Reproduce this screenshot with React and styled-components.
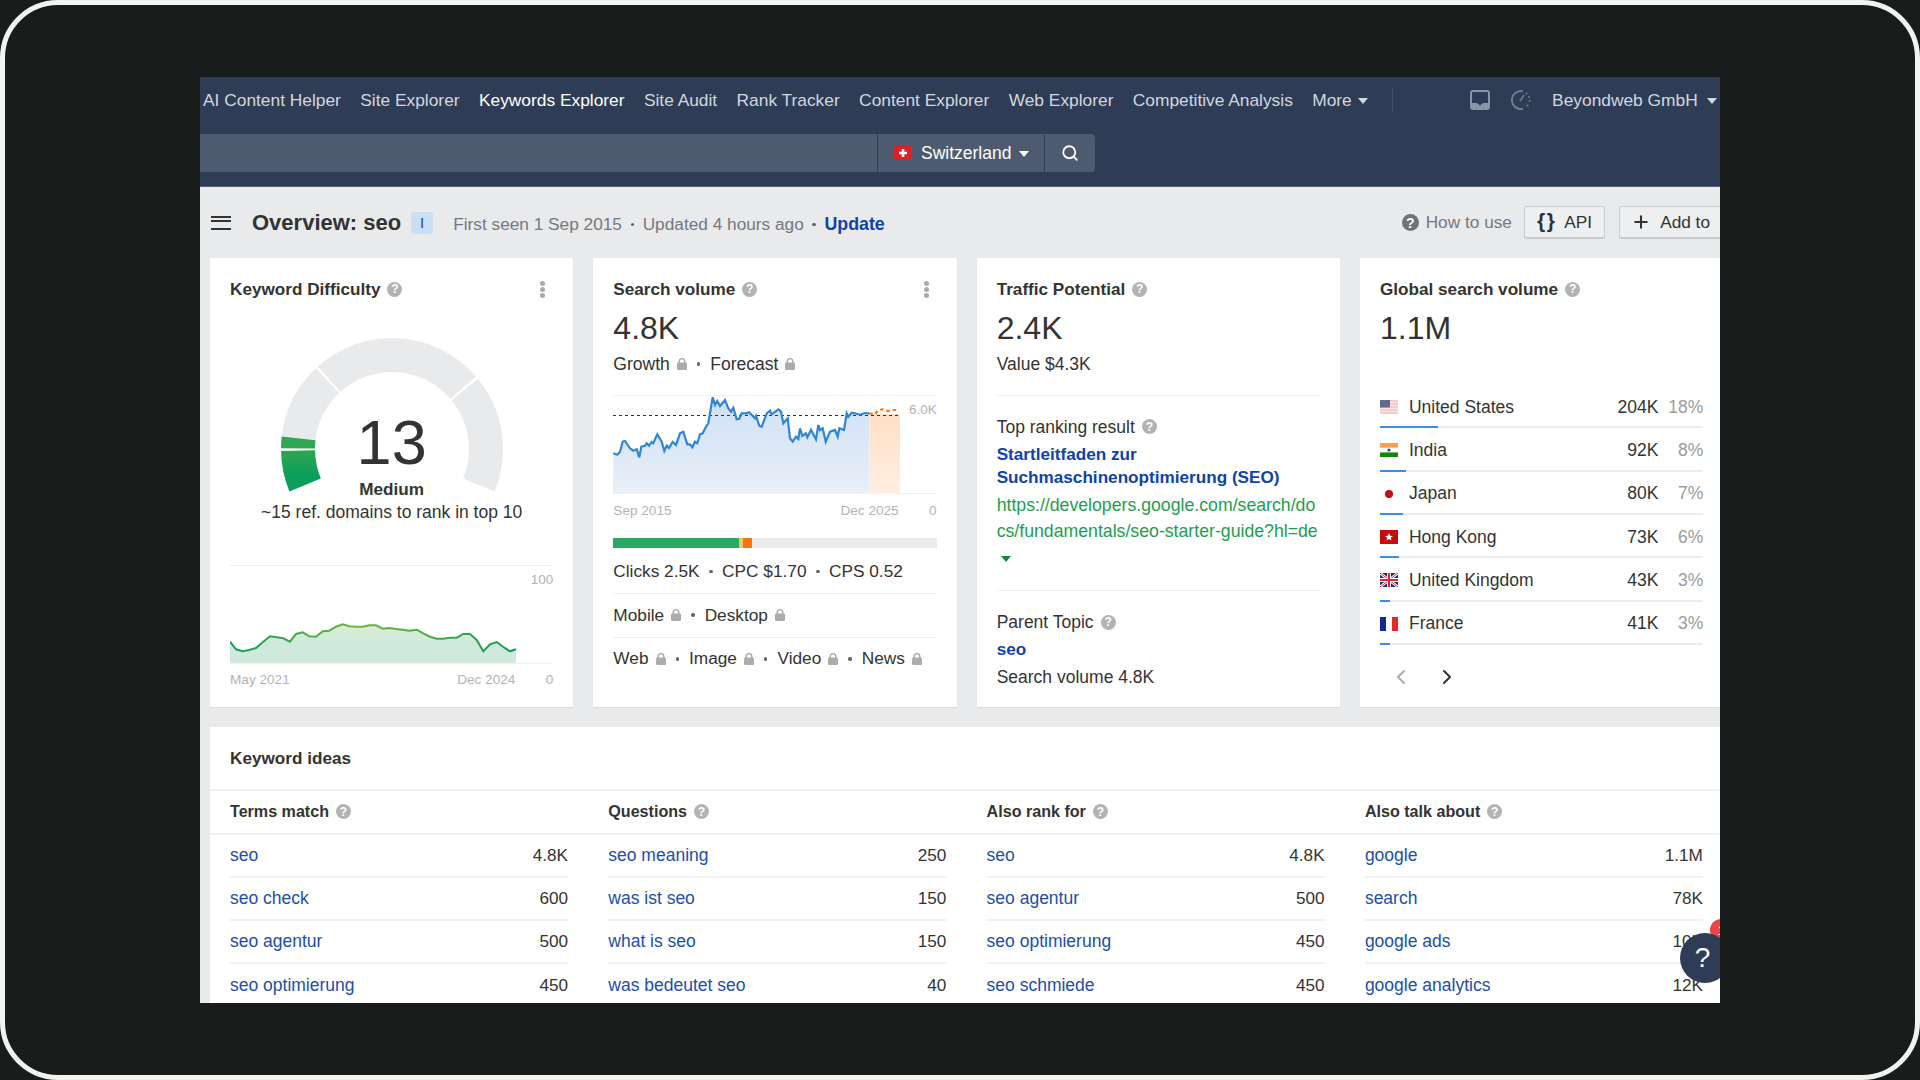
import React from 'react'
import styled, { createGlobalStyle } from 'styled-components'
import { Search, ChevronLeft, ChevronRight, Plus } from 'lucide-react'

const NAV_ITEMS = ['AI Content Helper', 'Site Explorer', 'Keywords Explorer', 'Site Audit', 'Rank Tracker', 'Content Explorer', 'Web Explorer', 'Competitive Analysis']

const COUNTRIES = [
  { name: 'United States', flag: 'us', value: '204K', share: '18%', bar: 58 },
  { name: 'India', flag: 'in', value: '92K', share: '8%', bar: 26 },
  { name: 'Japan', flag: 'jp', value: '80K', share: '7%', bar: 23 },
  { name: 'Hong Kong', flag: 'hk', value: '73K', share: '6%', bar: 19 },
  { name: 'United Kingdom', flag: 'gb', value: '43K', share: '3%', bar: 10 },
  { name: 'France', flag: 'fr', value: '41K', share: '3%', bar: 10 },
]

const IDEAS = [
  { title: 'Terms match', rows: [['seo', '4.8K'], ['seo check', '600'], ['seo agentur', '500'], ['seo optimierung', '450']] },
  { title: 'Questions', rows: [['seo meaning', '250'], ['was ist seo', '150'], ['what is seo', '150'], ['was bedeutet seo', '40']] },
  { title: 'Also rank for', rows: [['seo', '4.8K'], ['seo agentur', '500'], ['seo optimierung', '450'], ['seo schmiede', '450']] },
  { title: 'Also talk about', rows: [['google', '1.1M'], ['search', '78K'], ['google ads', '10K'], ['google analytics', '12K']] },
]

// traced from the reference at 3x, converted to chart coordinates below
const DIFFICULTY_TREND = [[30,155],[48,178],[68,184],[88,180],[108,174],[130,155],[150,139],[170,142],[190,145],[210,155],[228,132],[248,127],[268,139],[288,140],[308,124],[328,122],[348,110],[368,103],[388,109],[408,110],[428,110],[448,106],[468,106],[488,116],[508,114],[528,117],[548,119],[568,122],[590,119],[610,130],[630,140],[650,146],[670,146],[690,143],[710,143],[730,132],[750,132],[770,150],[790,184],[810,163],[830,156],[850,171],[870,184],[888,178]]
const VOLUME_TREND = [[40,220],[52,224],[60,215],[68,185],[75,183],[90,205],[100,212],[110,208],[118,232],[124,200],[135,197],[140,190],[147,197],[155,186],[160,190],[172,163],[185,185],[193,213],[200,197],[207,204],[218,186],[228,195],[240,160],[250,155],[262,193],[270,193],[277,202],[285,185],[292,190],[300,163],[308,160],[318,140],[325,130],[338,52],[345,75],[352,63],[360,78],[375,60],[385,85],[393,95],[400,83],[410,118],[418,116],[425,100],[440,100],[447,97],[465,115],[468,108],[478,137],[485,140],[500,100],[510,92],[515,103],[535,88],[543,95],[550,130],[563,115],[570,175],[578,185],[588,170],[595,177],[600,145],[607,168],[617,160],[622,172],[633,150],[648,178],[655,135],[660,150],[668,145],[677,185],[690,155],[705,150],[713,170],[718,145],[732,150],[740,100],[745,110],[755,98],[765,100],[780,104],[795,99],[808,100]]
const VOLUME_FORECAST = [[808,100],[825,103],[835,90],[848,88],[865,93],[880,90],[898,90]]

const toPoints = (list, ox, oy) => list.map(([x, y]) => `${((x - ox) / 3).toFixed(1)},${((y - oy) / 3).toFixed(1)}`).join(' ')

const polar = (r, deg) => {
  const a = (deg * Math.PI) / 180
  return `${(120 + r * Math.cos(a)).toFixed(2)} ${(119 - r * Math.sin(a)).toFixed(2)}`
}

const sector = (from, to) =>
  `M${polar(111, from)} A111 111 0 0 0 ${polar(111, to)} L${polar(77, to)} A77 77 0 0 1 ${polar(77, from)} Z`

const GlobalStyle = createGlobalStyle`
  html, body {
    margin: 0;
    background: #181c1b;
  }
  * {
    box-sizing: border-box;
  }
`

const Frame = styled.div`
  width: 1920px;
  height: 1080px;
  padding: 72px 0 0 195px;
  background: #181c1b;
  border: 5px solid #f3f4ef;
  border-radius: 58px;
  overflow: hidden;
  font-family: 'Liberation Sans', Arial, sans-serif;
  font-size: 17.5px;
  color: #333;
`

const Screen = styled.div`
  position: relative;
  width: 1520px;
  height: 926px;
  display: flex;
  flex-direction: column;
  overflow: hidden;
  background: #e9eaec;
`

const Header = styled.header`
  flex: none;
  height: 110px;
  background: #2e3c56;
  border-bottom: 1px solid #566579;
`

const NavRow = styled.nav`
  height: 46px;
  margin-bottom: 11px;
  padding-left: 3px;
  display: flex;
  align-items: center;
  font-size: 17.35px;
  white-space: nowrap;
`

const NavLink = styled.a`
  margin-right: 19.4px;
  color: ${(p) => (p.$active ? '#fff' : '#d3d7de')};
`

const Caret = styled.i`
  display: inline-block;
  margin-left: ${(p) => p.$gap || 6}px;
  border-left: 5px solid transparent;
  border-right: 5px solid transparent;
  border-top: 6px solid ${(p) => p.$color || '#d3d7de'};
  vertical-align: 2px;
`

const NavDivider = styled.span`
  width: 1px;
  height: 24px;
  margin: 0 0 0 5px;
  background: #435068;
`

const NavIcon = styled.span`
  display: flex;
  margin-left: ${(p) => p.$left}px;
`

const Account = styled.span`
  margin-left: 21px;
  color: #d3d7de;
`

const SearchRow = styled.div`
  height: 38px;
  display: flex;
`

const SearchInput = styled.div`
  width: 677px;
  background: #4d5a70;
`

const CountrySelect = styled.div`
  width: 166px;
  margin-left: 1px;
  padding-left: 16px;
  display: flex;
  align-items: center;
  background: #4d5a70;
  color: #fff;
`

const SearchButton = styled.div`
  width: 50px;
  margin-left: 1px;
  display: flex;
  align-items: center;
  justify-content: center;
  background: #4d5a70;
  border-radius: 0 4px 4px 0;
  color: #fff;
`

const Toolbar = styled.div`
  flex: none;
  height: 71px;
  margin-right: -3px;
  padding-left: 11px;
  display: flex;
  align-items: center;
  font-size: 17.25px;
`

const Burger = styled.span`
  width: 20px;
  height: 14px;
  border-top: 2.4px solid #333;
  border-bottom: 2.4px solid #333;
  position: relative;
  &::after {
    content: '';
    position: absolute;
    left: 0;
    right: 0;
    top: 2.4px;
    height: 2.4px;
    background: #333;
  }
`

const PageTitle = styled.h1`
  margin: 1px 0 0 21px;
  font-size: 22px;
  font-weight: 700;
  color: #333;
`

const Badge = styled.span`
  width: 22px;
  height: 22px;
  margin-left: 10px;
  display: flex;
  align-items: center;
  justify-content: center;
  background: #c9dff6;
  border-radius: 3px;
  font-size: 15px;
  color: #2b4a7a;
`

const Meta = styled.div`
  margin: 4px 0 0 20px;
  display: flex;
  align-items: center;
  color: #75797f;
`

const MetaLink = styled.a`
  color: #0f43a8;
  font-weight: 700;
  font-size: 17.8px;
`

const Dot = styled.span`
  width: 3.5px;
  height: 3.5px;
  margin: 0 ${(p) => p.$gap || 10}px;
  flex: none;
  border-radius: 50%;
  background: ${(p) => p.$color || '#666'};
`

const ToolbarRight = styled.div`
  margin-left: auto;
  display: flex;
  align-items: center;
`

const HowTo = styled.span`
  display: flex;
  align-items: center;
  gap: 7px;
  margin-right: 12px;
  color: #75797f;
`

const ToolButton = styled.button`
  height: 33px;
  margin-left: ${(p) => p.$left || 0}px;
  padding: 0 12px 0 ${(p) => p.$pad || 12}px;
  display: flex;
  align-items: center;
  gap: ${(p) => p.$gap || 8}px;
  background: #eeeff1;
  border: 1px solid #c9cbcf;
  border-bottom-width: 2px;
  border-radius: 3px;
  font: inherit;
  color: #333;
`

const Braces = styled.span`
  font-weight: 700;
  font-size: 21px;
  letter-spacing: 1.5px;
  line-height: 1;
  margin-top: -3px;
`

const Cards = styled.div`
  flex: none;
  padding-left: 10px;
  display: grid;
  grid-template-columns: repeat(4, 363.33px);
  gap: 20px;
`

const Card = styled.section`
  height: 449px;
  padding: 20px 20px 0;
  background: #fff;
  box-shadow: 0 1px 1px rgba(0, 0, 0, 0.06);
`

const CardHead = styled.div`
  height: 22px;
  display: flex;
  align-items: center;
`

const CardTitle = styled.span`
  font-size: 17.15px;
  font-weight: 700;
  color: #333;
`

const Help = styled.span`
  width: ${(p) => p.$size || 15}px;
  height: ${(p) => p.$size || 15}px;
  margin-left: ${(p) => p.$left ?? 7}px;
  flex: none;
  display: inline-flex;
  align-items: center;
  justify-content: center;
  border-radius: 50%;
  background: ${(p) => p.$color || '#b1b3b5'};
  color: #fff;
  font-size: ${(p) => (p.$size || 15) - 3}px;
  font-weight: 700;
  line-height: 1;
`

const Kebab = styled.span`
  margin-left: auto;
  margin-right: 8px;
  width: 5px;
  height: 5px;
  border-radius: 50%;
  background: #a9abad;
  box-shadow: 0 -6px 0 #a9abad, 0 6px 0 #a9abad;
`

const BigNumber = styled.div`
  margin-top: 8px;
  font-size: 32px;
  line-height: 40px;
  color: #333;
`

const SubRow = styled.div`
  margin-top: ${(p) => p.$top ?? 5}px;
  line-height: 22px;
  display: flex;
  align-items: center;
  white-space: nowrap;
`

const GaugeBox = styled.div`
  position: relative;
  width: 240px;
  height: 170px;
  margin: 30px auto 0;
`

const GaugeValue = styled.div`
  position: absolute;
  left: 0;
  right: 0;
  top: 77px;
  text-align: center;
  font-size: 63px;
  line-height: 70px;
  color: #333;
`

const GaugeLabel = styled.div`
  position: absolute;
  left: 0;
  right: 0;
  top: 148px;
  text-align: center;
  font-size: 17.15px;
  font-weight: 700;
  line-height: 22px;
`

const GaugeCaption = styled.div`
  margin-top: 1px;
  text-align: center;
  line-height: 22px;
  white-space: nowrap;
`

const Rule = styled.div`
  margin-top: ${(p) => p.$top || 0}px;
  border-top: 1px solid #ececed;
`

const ChartBox = styled.div`
  position: relative;
  margin-top: ${(p) => p.$top || 0}px;
  line-height: 0;
`

const ChartMax = styled.span`
  position: absolute;
  right: 0;
  top: ${(p) => p.$top}px;
  font-size: 13.5px;
  line-height: 18px;
  color: #b2b3b5;
`

const AxisRow = styled.div`
  margin-top: 7px;
  display: flex;
  font-size: 13.6px;
  line-height: 18px;
  color: #b2b3b5;
`

const AxisEnd = styled.span`
  margin-left: auto;
`

const AxisZero = styled.span`
  width: ${(p) => p.$width}px;
  text-align: right;
`

const SerpBar = styled.div`
  height: 10px;
  margin-top: 18px;
  display: flex;
  background: #eaebed;
`

const SerpPart = styled.span`
  width: ${(p) => p.$width}px;
  background: ${(p) => p.$color};
`

const StatRow = styled.div`
  height: 43.8px;
  margin-top: ${(p) => p.$top || 0}px;
  display: flex;
  align-items: center;
  font-size: 17.25px;
  white-space: nowrap;
  border-bottom: 1px solid ${(p) => (p.$last ? 'transparent' : '#ececed')};
`

const LockMark = styled.svg`
  width: 10px;
  height: 12px;
  margin-left: 7px;
  flex: none;
`

const SectionLabel = styled.div`
  padding-top: 20px;
  display: flex;
  align-items: center;
  line-height: 22px;
`

const ResultLink = styled.a`
  display: block;
  margin-top: 5px;
  font-size: 17.15px;
  font-weight: 700;
  line-height: 23px;
  color: #0f43a8;
`

const ResultUrl = styled.a`
  display: block;
  margin-top: 3.5px;
  font-size: 17.7px;
  line-height: 26px;
  color: #1e9d50;
  white-space: nowrap;
`

const UrlLine = styled.span`
  display: block;
`

const UrlToggle = styled.i`
  display: block;
  width: 0;
  margin: 12px 0 0 4px;
  border-left: 5px solid transparent;
  border-right: 5px solid transparent;
  border-top: 6px solid #138a3e;
`

const TopicLink = styled.a`
  display: block;
  margin-top: 5px;
  font-size: 17.15px;
  font-weight: 700;
  line-height: 22px;
  color: #0f43a8;
`

const CountryList = styled.div`
  margin-top: 37px;
`

const CountryRow = styled.div`
  height: 43.33px;
  display: flex;
  flex-direction: column;
`

const CountryLine = styled.div`
  flex: 1;
  padding-top: 3px;
  display: flex;
  align-items: center;
`

const FlagBox = styled.svg`
  width: 18px;
  height: 14px;
  margin-right: ${(p) => p.$gap}px;
  flex: none;
`

const CountryValue = styled.span`
  margin-left: auto;
`

const CountryShare = styled.span`
  width: 45px;
  text-align: right;
  color: #9a9b9d;
`

const ShareTrack = styled.div`
  flex: none;
  height: 2px;
  background: #ececed;
`

const ShareFill = styled.div`
  width: ${(p) => p.$width}px;
  height: 2px;
  background: #3b8ee0;
`

const Pager = styled.div`
  margin-top: 20px;
  padding-left: 9px;
  display: flex;
  gap: 22px;
  color: #333;
`

const IdeasPanel = styled.section`
  flex: 1;
  margin: 20px 0 0 10px;
  background: #fff;
`

const IdeasTitle = styled.div`
  height: 64px;
  padding: 0 20px;
  display: flex;
  align-items: center;
  font-size: 17.15px;
  font-weight: 700;
  border-bottom: 2px solid #f0f1f2;
`

const IdeasHead = styled.div`
  height: 43.5px;
  border-bottom: 2px solid #f0f1f2;
`

const IdeasGrid = styled.div`
  padding: 0 20px;
  display: grid;
  grid-template-columns: repeat(4, 338px);
  column-gap: 40.3px;
`

const IdeasHeadCell = styled.div`
  height: 41px;
  display: flex;
  align-items: center;
  font-size: 16.1px;
  font-weight: 700;
`

const IdeaRow = styled.div`
  height: 43.33px;
  display: flex;
  align-items: center;
  justify-content: space-between;
  border-bottom: 2px solid #f0f1f2;
`

const IdeaLink = styled.a`
  color: #1b4fa8;
`

const IdeaVolume = styled.span`
  font-size: 17.15px;
`

const ChatBadge = styled.span`
  position: absolute;
  left: 1510px;
  top: 842px;
  width: 22px;
  height: 22px;
  display: flex;
  align-items: center;
  justify-content: center;
  border-radius: 50%;
  background: #ef4444;
  color: #fff;
  font-size: 13px;
`

const ChatButton = styled.span`
  position: absolute;
  left: 1480px;
  top: 856px;
  width: 50px;
  height: 50px;
  padding-right: 5px;
  display: flex;
  align-items: center;
  justify-content: center;
  border-radius: 50%;
  background: #2e3c56;
  color: #fff;
  font-size: 28px;
`

const Lock = () => (
  <LockMark viewBox="0 0 10 12">
    <path d="M2.2 5.5V3.4a2.8 2.8 0 0 1 5.6 0v2.1" fill="none" stroke="#aaacae" strokeWidth="1.5" />
    <rect x="0" y="4.6" width="10" height="7.4" rx="1.2" fill="#aaacae" />
  </LockMark>
)

const Flag = ({ code, gap = 11 }) => (
  <FlagBox viewBox="0 0 18 14" $gap={gap}>
    {code === 'us' && (
      <>
        <rect width="18" height="14" fill="#fbe3e3" />
        <path d="M0 1h18M0 4h18M0 7h18M0 10h18M0 13h18" stroke="#f2b3b3" strokeWidth="1.2" />
        <rect width="10" height="7.5" fill="#5d6c8c" />
      </>
    )}
    {code === 'in' && (
      <>
        <rect width="18" height="14" fill="#fff" />
        <rect width="18" height="4.6" fill="#ff9f3f" />
        <rect y="9.4" width="18" height="4.6" fill="#138808" />
        <circle cx="9" cy="7" r="1.6" fill="#2a4a8c" />
      </>
    )}
    {code === 'jp' && <circle cx="9" cy="7" r="4" fill="#c80a0a" />}
    {code === 'hk' && (
      <>
        <rect width="18" height="14" fill="#c80a0a" />
        <path d="M9 3l1.1 2.7 2.9.2-2.2 1.9.7 2.8L9 9.1l-2.5 1.5.7-2.8L5 5.9l2.9-.2z" fill="#fff" />
      </>
    )}
    {code === 'gb' && (
      <>
        <rect width="18" height="14" fill="#1c2d6e" />
        <path d="M0 0l18 14M18 0L0 14" stroke="#fff" strokeWidth="2.6" />
        <path d="M0 0l18 14M18 0L0 14" stroke="#d8283c" strokeWidth="1" />
        <path d="M9 0v14M0 7h18" stroke="#fff" strokeWidth="4" />
        <path d="M9 0v14M0 7h18" stroke="#d8283c" strokeWidth="2.2" />
      </>
    )}
    {code === 'fr' && (
      <>
        <rect width="6" height="14" fill="#10298a" />
        <rect x="12" width="6" height="14" fill="#e12b2b" />
      </>
    )}
    {code === 'ch' && (
      <>
        <rect width="18" height="14" rx="1" fill="#d8232a" />
        <path d="M9 3v8M5 7h8" stroke="#fff" strokeWidth="2.6" />
      </>
    )}
  </FlagBox>
)

const BookIcon = () => (
  <svg width="20" height="20" viewBox="0 0 20 20">
    <rect x="1" y="1" width="18" height="18" rx="2" fill="none" stroke="#8a95a6" strokeWidth="2" />
    <path d="M1 13h6l3 2.5 3-2.5h6v4a2 2 0 0 1-2 2H3a2 2 0 0 1-2-2z" fill="#8a95a6" />
  </svg>
)

const SpeedIcon = () => (
  <svg width="20" height="20" viewBox="0 0 20 20" fill="none" stroke="#6f7c91" strokeWidth="2">
    <path d="M12 1.3A9 9 0 1 0 12 18.8" />
    <path d="M15.5 3.5l.1.1M18 7l.1.1M18.7 11v.1M16.6 15.5l.1.1" strokeLinecap="round" />
    <path d="M9 11l4-6" strokeWidth="1.6" />
  </svg>
)

const KeywordGauge = () => (
  <svg width="240" height="170" viewBox="0 0 240 170">
    <defs>
      <linearGradient id="gaugeGreen" x1="0" y1="0" x2="0" y2="1">
        <stop offset="0" stopColor="#2ea552" />
        <stop offset="0.6" stopColor="#0b9f5d" />
      </linearGradient>
    </defs>
    <path d={sector(-22.5, 39.3)} fill="#e9eaec" />
    <path d={sector(40.7, 132)} fill="#e9eaec" />
    <path d={sector(133.4, 173.5)} fill="#e9eaec" />
    <path d={sector(173.5, 179.6)} fill="#2fa651" />
    <path d={sector(181, 202.5)} fill="url(#gaugeGreen)" />
  </svg>
)

const DifficultyChart = () => {
  const line = toPoints(DIFFICULTY_TREND, 30, 0)
  return (
    <svg width="323" height="74" viewBox="0 0 323 74">
      <defs>
        <linearGradient id="kdLine" x1="0" y1="0" x2="1" y2="0">
          <stop offset="0" stopColor="#0f9d58" />
          <stop offset="0.2" stopColor="#3aa84a" />
          <stop offset="0.45" stopColor="#6db640" />
          <stop offset="0.7" stopColor="#45ab48" />
          <stop offset="1" stopColor="#0f9d58" />
        </linearGradient>
        <linearGradient id="kdFill" x1="0" y1="0" x2="0" y2="1">
          <stop offset="0" stopColor="#dcedd3" />
          <stop offset="0.5" stopColor="#cfe9dc" />
        </linearGradient>
      </defs>
      <path d="M0 73.2H323" stroke="#ececed" />
      <polygon points={`0,73 ${line} 286,73`} fill="url(#kdFill)" />
      <polyline points={line} fill="none" stroke="url(#kdLine)" strokeWidth="2" />
    </svg>
  )
}

const VolumeChart = () => {
  const line = toPoints(VOLUME_TREND, 39, 45)
  const forecast = toPoints(VOLUME_FORECAST, 39, 45)
  return (
    <svg width="324" height="100" viewBox="0 0 324 100">
      <defs>
        <linearGradient id="volFill" x1="0" y1="0" x2="0" y2="1">
          <stop offset="0" stopColor="#cfe0f5" />
          <stop offset="1" stopColor="#e9f0f9" />
        </linearGradient>
        <linearGradient id="foreFill" x1="0" y1="0" x2="0" y2="1">
          <stop offset="0" stopColor="#fedfc6" />
          <stop offset="1" stopColor="#ffefe2" />
        </linearGradient>
      </defs>
      <path d="M0 0.5H324M0 98.5H324" stroke="#efeff0" />
      <polygon points={`0,99 ${line} 256.5,99`} fill="url(#volFill)" />
      <rect x="256.5" y="19" width="30.5" height="80" fill="url(#foreFill)" />
      <path d="M0 20.5H287" stroke="#333" strokeDasharray="3 3" />
      <polyline points={line} fill="none" stroke="#2f86d8" strokeWidth="2.2" />
      <polyline points={forecast} fill="none" stroke="#f57a14" strokeWidth="2.2" strokeDasharray="3.5 3" />
    </svg>
  )
}

const DifficultyCard = () => (
  <Card>
    <CardHead>
      <CardTitle>Keyword Difficulty</CardTitle>
      <Help>?</Help>
      <Kebab />
    </CardHead>
    <GaugeBox>
      <KeywordGauge />
      <GaugeValue>13</GaugeValue>
      <GaugeLabel>Medium</GaugeLabel>
    </GaugeBox>
    <GaugeCaption>~15 ref. domains to rank in top 10</GaugeCaption>
    <Rule $top={42} />
    <ChartBox $top={24}>
      <DifficultyChart />
      <ChartMax $top={-19}>100</ChartMax>
    </ChartBox>
    <AxisRow>
      <span>May 2021</span>
      <AxisEnd>Dec 2024</AxisEnd>
      <AxisZero $width={38}>0</AxisZero>
    </AxisRow>
  </Card>
)

const VolumeCard = () => (
  <Card>
    <CardHead>
      <CardTitle>Search volume</CardTitle>
      <Help>?</Help>
      <Kebab />
    </CardHead>
    <BigNumber>4.8K</BigNumber>
    <SubRow>
      Growth
      <Lock />
      <Dot />
      Forecast
      <Lock />
    </SubRow>
    <ChartBox $top={20}>
      <VolumeChart />
      <ChartMax $top={6}>6.0K</ChartMax>
    </ChartBox>
    <AxisRow>
      <span>Sep 2015</span>
      <AxisEnd>Dec 2025</AxisEnd>
      <AxisZero $width={38}>0</AxisZero>
    </AxisRow>
    <SerpBar>
      <SerpPart $width={126} $color="#2aa866" />
      <SerpPart $width={4} $color="#efc75e" />
      <SerpPart $width={9} $color="#f97316" />
    </SerpBar>
    <StatRow $top={2}>
      Clicks 2.5K
      <Dot $gap={9.5} />
      CPC $1.70
      <Dot $gap={9.5} />
      CPS 0.52
    </StatRow>
    <StatRow>
      Mobile
      <Lock />
      <Dot />
      Desktop
      <Lock />
    </StatRow>
    <StatRow $last>
      Web
      <Lock />
      <Dot />
      Image
      <Lock />
      <Dot />
      Video
      <Lock />
      <Dot />
      News
      <Lock />
    </StatRow>
  </Card>
)

const TrafficCard = () => (
  <Card>
    <CardHead>
      <CardTitle>Traffic Potential</CardTitle>
      <Help>?</Help>
    </CardHead>
    <BigNumber>2.4K</BigNumber>
    <SubRow>Value $4.3K</SubRow>
    <Rule $top={19.5} />
    <SectionLabel>
      Top ranking result
      <Help>?</Help>
    </SectionLabel>
    <ResultLink>
      Startleitfaden zur
      <br />
      Suchmaschinenoptimierung (SEO)
    </ResultLink>
    <ResultUrl>
      <UrlLine>https://developers.google.com/search/do</UrlLine>
      <UrlLine>cs/fundamentals/seo-starter-guide?hl=de</UrlLine>
    </ResultUrl>
    <UrlToggle />
    <Rule $top={28} />
    <SectionLabel>
      Parent Topic
      <Help>?</Help>
    </SectionLabel>
    <TopicLink>seo</TopicLink>
    <SubRow $top={6}>Search volume 4.8K</SubRow>
  </Card>
)

const GlobalCard = () => (
  <Card>
    <CardHead>
      <CardTitle>Global search volume</CardTitle>
      <Help>?</Help>
    </CardHead>
    <BigNumber>1.1M</BigNumber>
    <CountryList>
      {COUNTRIES.map((c) => (
        <CountryRow key={c.name}>
          <CountryLine>
            <Flag code={c.flag} />
            {c.name}
            <CountryValue>{c.value}</CountryValue>
            <CountryShare>{c.share}</CountryShare>
          </CountryLine>
          <ShareTrack>
            <ShareFill $width={c.bar} />
          </ShareTrack>
        </CountryRow>
      ))}
    </CountryList>
    <Pager>
      <ChevronLeft size={24} color="#aaacae" />
      <ChevronRight size={24} />
    </Pager>
  </Card>
)

const App = () => (
  <Frame>
    <GlobalStyle />
    <Screen>
      <Header>
        <NavRow>
          {NAV_ITEMS.map((item) => (
            <NavLink key={item} $active={item === 'Keywords Explorer'}>
              {item}
            </NavLink>
          ))}
          <NavLink>
            More
            <Caret />
          </NavLink>
          <NavDivider />
          <NavIcon $left={77}>
            <BookIcon />
          </NavIcon>
          <NavIcon $left={21}>
            <SpeedIcon />
          </NavIcon>
          <Account>
            Beyondweb GmbH
            <Caret $gap={9} />
          </Account>
        </NavRow>
        <SearchRow>
          <SearchInput />
          <CountrySelect>
            <Flag code="ch" gap={9} />
            <span>
              Switzerland
              <Caret $color="#fff" $gap={8} />
            </span>
          </CountrySelect>
          <SearchButton>
            <Search size={18} strokeWidth={2.4} />
          </SearchButton>
        </SearchRow>
      </Header>
      <Toolbar>
        <Burger />
        <PageTitle>Overview: seo</PageTitle>
        <Badge>I</Badge>
        <Meta>
          First seen 1 Sep 2015
          <Dot $gap={8.6} />
          Updated 4 hours ago
          <Dot $gap={8.6} />
          <MetaLink>Update</MetaLink>
        </Meta>
        <ToolbarRight>
          <HowTo>
            <Help $size={17} $left={0} $color="#6f7276">?</Help>
            How to use
          </HowTo>
          <ToolButton>
            <Braces>{'{}'}</Braces>
            API
          </ToolButton>
          <ToolButton $left={14} $gap={9} $pad={11}>
            <Plus size={20} strokeWidth={2.4} />
            Add to
          </ToolButton>
        </ToolbarRight>
      </Toolbar>
      <Cards>
        <DifficultyCard />
        <VolumeCard />
        <TrafficCard />
        <GlobalCard />
      </Cards>
      <IdeasPanel>
        <IdeasTitle>Keyword ideas</IdeasTitle>
        <IdeasHead>
          <IdeasGrid>
            {IDEAS.map((col) => (
              <IdeasHeadCell key={col.title}>
                {col.title}
                <Help>?</Help>
              </IdeasHeadCell>
            ))}
          </IdeasGrid>
        </IdeasHead>
        <IdeasGrid>
          {IDEAS.map((col) => (
            <div key={col.title}>
              {col.rows.map(([term, volume]) => (
                <IdeaRow key={term}>
                  <IdeaLink>{term}</IdeaLink>
                  <IdeaVolume>{volume}</IdeaVolume>
                </IdeaRow>
              ))}
            </div>
          ))}
        </IdeasGrid>
      </IdeasPanel>
      <ChatBadge>1</ChatBadge>
      <ChatButton>?</ChatButton>
    </Screen>
  </Frame>
)

export default App
